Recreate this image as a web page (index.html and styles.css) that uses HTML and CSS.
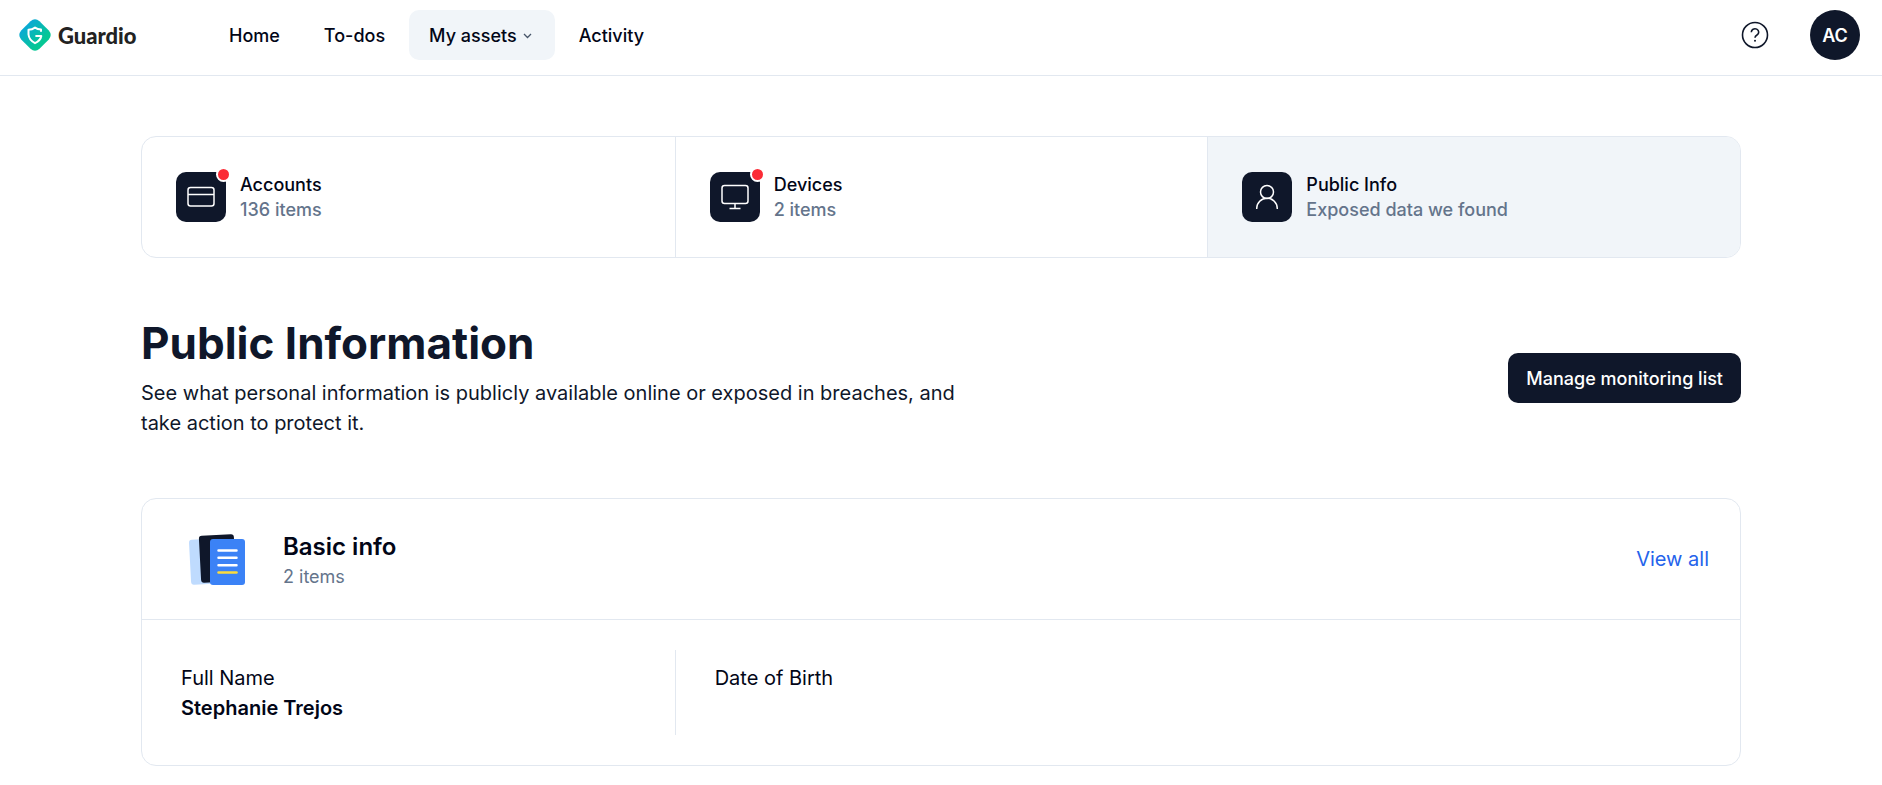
FILE: index.html
```html
<!DOCTYPE html>
<html lang="en">
<head>
    <meta charset="UTF-8">
    <meta name="viewport" content="width=device-width, initial-scale=1.0">
    <title>Guardio - Public Information</title>
    <link rel="stylesheet" href="styles.css">
</head>
<body>

    <header class="topbar">
        <a class="logo" href="#">
            <svg class="logo-mark" viewBox="0 0 32 32" aria-hidden="true">
                <defs>
                    <linearGradient id="logoFill" x1="0" y1="0" x2="1" y2="1">
                        <stop offset="0.2" stop-color="#0aa9d6"/>
                        <stop offset="0.7" stop-color="#06c795"/>
                    </linearGradient>
                </defs>
                <path fill="url(#logoFill)" d="M11.5 2.2Q16-1.6 20.5 2.2L29.8 11.5Q33.6 16 29.8 20.5L20.5 29.8Q16 33.6 11.5 29.8L2.2 20.5Q-1.6 16 2.2 11.5Z"/>
                <path fill="none" stroke="#fff" stroke-width="2" stroke-linejoin="round" d="M22 12.800V10.600Q18.500 10.400 16 8.600Q13.200 10.600 9.500 10.700V15.500Q10 21 16 24.200Q21.500 21.500 22.300 17H16.400"/>
            </svg>
            <span class="logo-text">Guardio</span>
        </a>

        <nav class="nav">
            <a class="nav-item" href="#">Home</a>
            <a class="nav-item" href="#">To-dos</a>
            <button class="nav-item active" type="button">
                My assets
                <svg class="chevron" viewBox="0 0 15 15" aria-hidden="true"><path d="M4 6l3.500 3.500L11 6"/></svg>
            </button>
            <a class="nav-item" href="#">Activity</a>
        </nav>

        <div class="topbar-right">
            <button class="help" type="button" aria-label="Help">
                <svg viewBox="0 0 30 30" aria-hidden="true">
                    <circle cx="15" cy="15" r="12.500"/>
                    <path d="M11.300 12.200a3.700 3.400 0 1 1 5.700 2.800q-2 1.200-2 2.800"/>
                    <circle class="dot" cx="15" cy="20.800" r="1"/>
                </svg>
            </button>
            <button class="avatar" type="button">AC</button>
        </div>
    </header>

    <main class="page">
        <nav class="assets">
            <a class="asset" href="#">
                <span class="asset-icon">
                    <svg viewBox="0 0 30 30" aria-hidden="true">
                        <rect x="2" y="5.500" width="26" height="18.500" rx="2.500"/>
                        <path d="M2 12.500h26"/>
                    </svg>
                    <span class="alert"></span>
                </span>
                <span class="asset-text">
                    <span class="asset-name">Accounts</span>
                    <span class="muted">136 items</span>
                </span>
            </a>
            <a class="asset" href="#">
                <span class="asset-icon">
                    <svg viewBox="0 0 30 30" aria-hidden="true">
                        <rect x="2" y="3.500" width="26" height="18" rx="2.500"/>
                        <path d="M15 21.500v5M9.500 26.500h11"/>
                    </svg>
                    <span class="alert"></span>
                </span>
                <span class="asset-text">
                    <span class="asset-name">Devices</span>
                    <span class="muted">2 items</span>
                </span>
            </a>
            <a class="asset selected" href="#">
                <span class="asset-icon">
                    <svg viewBox="0 0 30 30" aria-hidden="true">
                        <circle cx="15" cy="10" r="6.500"/>
                        <path d="M4.700 27v-.5a10.300 10.300 0 0 1 20.600 0v.5"/>
                    </svg>
                </span>
                <span class="asset-text">
                    <span class="asset-name">Public Info</span>
                    <span class="muted">Exposed data we found</span>
                </span>
            </a>
        </nav>

        <section class="intro">
            <div class="intro-text">
                <h1>Public Information</h1>
                <p>See what personal information is publicly available online or exposed in breaches, and take action to protect it.</p>
            </div>
            <button class="primary" type="button">Manage monitoring list</button>
        </section>

        <section class="card">
            <div class="card-head">
                <svg class="card-icon" viewBox="0 0 60 60" aria-hidden="true">
                    <rect x="4" y="10" width="34" height="45" rx="3" fill="#bfdbfe" transform="rotate(-3 21 32)"/>
                    <rect x="14" y="6" width="35" height="47" rx="3" fill="#0f172a" transform="rotate(-3 31 30)"/>
                    <rect x="24" y="10" width="35" height="46" rx="3" fill="#3b82f6"/>
                    <path d="M32.500 21.500h18M32.500 28.800h18M32.500 36.200h18" stroke="#fff" stroke-width="2.500" stroke-linecap="round"/>
                    <path d="M32.500 43.500h18" stroke="#fcdc3c" stroke-width="2.500" stroke-linecap="round"/>
                </svg>
                <div class="card-title">
                    <h2>Basic info</h2>
                    <span class="muted">2 items</span>
                </div>
                <a class="view-all" href="#">View all</a>
            </div>
            <dl class="fields">
                <div class="field">
                    <dt>Full Name</dt>
                    <dd>Stephanie Trejos</dd>
                </div>
                <div class="field">
                    <dt>Date of Birth</dt>
                </div>
            </dl>
        </section>
    </main>

</body>
</html>
```

FILE: styles.css
```css
* {
    box-sizing: border-box;
}
body {
    margin: 0;
    font-family: Inter, "Liberation Sans", sans-serif;
    font-size: 18px;
    line-height: 25px;
    color: #020617;
    background: #fff;
}
a {
    color: inherit;
    text-decoration: none;
}
button {
    font: inherit;
    color: inherit;
    border: none;
    background: none;
    cursor: pointer;
}

/* top bar */
.topbar {
    display: flex;
    align-items: center;
    padding: 10px 22px 15px 19px;
    border-bottom: 1px solid #e2e8f0;
}
.logo {
    display: flex;
    align-items: center;
    gap: 7px;
    width: 190px;
}
.logo-mark {
    width: 32px;
    height: 32px;
}
.logo-text {
    font-family: Lato, sans-serif;
    font-size: 22px;
    font-weight: 900;
    color: #222;
}
.nav {
    display: flex;
    gap: 4px;
}
.nav-item {
    display: flex;
    align-items: center;
    height: 50px;
    padding: 0 20px;
    border-radius: 10px;
    font-weight: 500;
}
.nav-item.active {
    background: #f1f5f9;
}
.chevron {
    width: 15px;
    height: 15px;
    margin-left: 3px;
    fill: none;
    stroke: #475569;
    stroke-width: 1.3;
}
.topbar-right {
    display: flex;
    align-items: center;
    gap: 40px;
    margin-left: auto;
}
.help {
    display: flex;
    padding: 0;
}
.help svg {
    width: 30px;
    height: 30px;
    fill: none;
    stroke: #0f172a;
    stroke-width: 1.6;
}
.help .dot {
    fill: #0f172a;
    stroke: none;
}
.avatar {
    width: 50px;
    height: 50px;
    padding: 0;
    border-radius: 50%;
    background: #0f172a;
    color: #fff;
    font-weight: 600;
}

/* asset tabs */
.page {
    max-width: 1640px;
    margin: 0 auto;
    padding: 60px 20px 20px;
}
.assets {
    display: grid;
    grid-template-columns: repeat(3, 1fr);
    border: 1px solid #e2e8f0;
    border-radius: 15px;
    overflow: hidden;
}
.asset {
    display: flex;
    align-items: center;
    gap: 14px;
    padding: 35px 34px;
}
.asset + .asset {
    border-left: 1px solid #e2e8f0;
}
.asset.selected {
    background: #f1f5f9;
}
.asset-icon {
    position: relative;
    display: flex;
    align-items: center;
    justify-content: center;
    width: 50px;
    height: 50px;
    border-radius: 10px;
    background: #0f172a;
}
.asset-icon svg {
    width: 30px;
    height: 30px;
    fill: none;
    stroke: #fff;
    stroke-width: 1.5;
}
.alert {
    position: absolute;
    top: -5px;
    right: -5px;
    width: 15px;
    height: 15px;
    border: 2px solid #fff;
    border-radius: 50%;
    background: #fb2c36;
}
.asset-text {
    display: flex;
    flex-direction: column;
}
.asset-name,
.asset .muted {
    font-weight: 500;
}
.muted {
    color: #64748b;
}

/* page heading */
.intro {
    display: flex;
    align-items: center;
    justify-content: space-between;
    margin: 60px 0;
}
.intro-text {
    max-width: 840px;
    color: #0f172a;
}
h1 {
    margin: 0 0 10px;
    font-size: 44px;
    line-height: 50px;
    font-weight: 700;
}
.intro p {
    margin: 0;
    font-size: 20px;
    line-height: 30px;
}
.primary {
    height: 50px;
    padding: 0 18px;
    border-radius: 10px;
    background: #0f172a;
    color: #fff;
    font-weight: 500;
}

/* basic info card */
.card {
    border: 1px solid #e2e8f0;
    border-radius: 15px;
    font-size: 20px;
    line-height: 30px;
}
.card-head {
    display: flex;
    align-items: center;
    padding: 27px 31px 27px 44px;
    border-bottom: 1px solid #e2e8f0;
}
.card-icon {
    width: 60px;
    height: 60px;
}
.card-title {
    flex: 1;
    margin-left: 37px;
    padding-top: 6px;
}
.card-title .muted {
    display: block;
    font-size: 18px;
}
h2 {
    margin: 0;
    font-size: 24px;
    line-height: 30px;
    font-weight: 600;
}
.view-all {
    color: #2563eb;
}
.fields {
    display: grid;
    grid-template-columns: repeat(3, 1fr);
    margin: 0;
    padding: 30px 0;
}
.field {
    min-height: 85px;
    padding: 13px 39px 12px;
}
.field + .field {
    border-left: 1px solid #e2e8f0;
}
dd {
    margin: 0;
    font-weight: 600;
}
```
